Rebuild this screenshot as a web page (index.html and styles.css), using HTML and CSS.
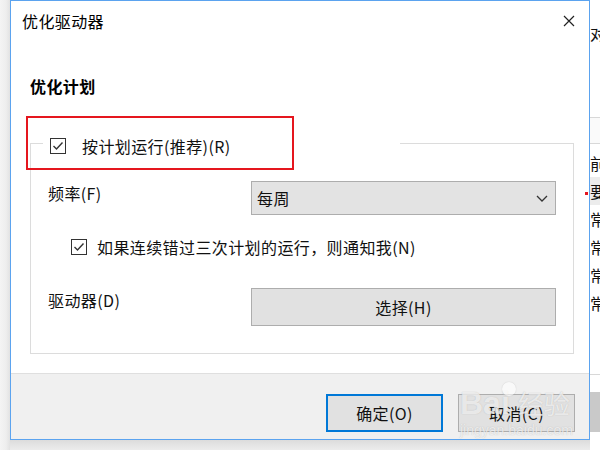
FILE: index.html
```html
<!DOCTYPE html>
<html lang="zh-CN">
<head>
<meta charset="utf-8">
<title>优化驱动器</title>
<link rel="stylesheet" href="styles.css">
</head>
<body>
<div class="screen">
  <div class="shade-left"></div>
  <div class="dialog">
    <div class="titlebar">
      <span class="title">优化驱动器</span>
      <svg class="close" width="12" height="12" viewBox="0 0 12 12"><path d="M1 1L11 11M11 1L1 11" stroke="#222" stroke-width="1.2" fill="none"/></svg>
    </div>
    <div class="content">
      <div class="heading">优化计划</div>
      <fieldset class="group">
        <legend class="legend">
          <span class="check"><svg width="14" height="14" viewBox="0 0 14 14"><path d="M2.5 7L5.5 10L11.5 3.5" stroke="#333" stroke-width="1.4" fill="none"/></svg></span>
          <span class="legend-text">按计划运行(推荐)(R)</span>
        </legend>
        <div class="row row-freq">
          <span class="label">频率(F)</span>
          <div class="select">
            <span>每周</span>
            <svg class="chev" width="12" height="7" viewBox="0 0 12 7"><path d="M1 1L6 6L11 1" stroke="#333" stroke-width="1.3" fill="none"/></svg>
          </div>
        </div>
        <div class="row row-notify">
          <span class="check"><svg width="14" height="14" viewBox="0 0 14 14"><path d="M2.5 7L5.5 10L11.5 3.5" stroke="#333" stroke-width="1.4" fill="none"/></svg></span>
          <span>如果连续错过三次计划的运行，则通知我(N)</span>
        </div>
        <div class="row row-drive">
          <span class="label">驱动器(D)</span>
          <div class="btn btn-wide">选择(H)</div>
        </div>
      </fieldset>
    </div>
    <div class="footer">
      <div class="btn btn-primary">确定(O)</div>
      <div class="btn">取消(C)</div>
    </div>
  </div>
  <div class="bgwin">
    <div class="bg-top">对</div>
    <div class="bg-head"></div>
    <div class="bg-row">前</div>
    <div class="bg-row bg-sel">要</div>
    <div class="bg-row">常</div>
    <div class="bg-row">常</div>
    <div class="bg-row">常</div>
    <div class="bg-row">常</div>
    <div class="bg-gap"></div>
    <div class="bg-btn"></div>
  </div>
  <div class="annot-rect"></div>
  <div class="annot-dot"></div>
  <div class="watermark">
    <div class="wm-main"><span class="wm-bai">Bai</span><span class="wm-paw"></span><span class="wm-jy">经验</span></div>
    <div class="wm-url">jingyan.baidu.com</div>
  </div>
</div>
</body>
</html>
```
FILE: styles.css
```css
html, body {
  margin: 0;
  padding: 0;
}
body {
  background: #f2f2f2;
  font-family: "Noto Sans CJK SC", "Noto Sans", sans-serif;
  font-size: 16px;
  letter-spacing: 0.4px;
  color: #111;
}
.screen {
  position: relative;
  width: 600px;
  height: 450px;
  overflow: hidden;
  display: flex;
  align-items: flex-start;
  background: linear-gradient(to bottom, #f2f2f2 0, #f2f2f2 438px, #dcdcdc 440px, #ececec 450px);
}
.shade-left {
  width: 10px;
  height: 450px;
  flex: none;
  background: linear-gradient(to right, #f4f4f4 0, #eeeeee 6px, #e2e2e2 10px);
}
.dialog {
  width: 580px;
  height: 440px;
  flex: none;
  box-sizing: border-box;
  border: 1px solid #5ba3ef;
  background: #fff;
  display: flex;
  flex-direction: column;
  position: relative;
  z-index: 1;
}
.titlebar {
  height: 40px;
  flex: none;
  display: flex;
  align-items: center;
  justify-content: space-between;
  padding: 0 14px 0 11px;
}
.title {
  line-height: 22px;
  color: #000;
}
.close {
  margin-top: -1px;
}
.content {
  flex: 1;
  padding: 34px 15px 0 19px;
}
.heading {
  font-weight: bold;
  line-height: 22px;
  color: #000;
}
.group {
  margin: 33px 0 0 0;
  padding: 25px 15px 27px 17px;
  border: 1px solid #dcdcdc;
  min-width: 0;
}
.legend {
  margin-left: -5px;
  width: 357px;
  box-sizing: border-box;
  padding: 6px 0 0 7px;
  height: 26px;
  display: flex;
  align-items: center;
  gap: 16px;
  line-height: 20px;
}
.check {
  width: 16px;
  height: 16px;
  box-sizing: border-box;
  border: 1px solid #333;
  display: flex;
  align-items: center;
  justify-content: center;
  flex: none;
  background: #fff;
}
.row {
  display: flex;
}
.row-freq {
  height: 34px;
}
.label {
  width: 203px;
  flex: none;
  line-height: 22px;
  margin-top: 1px;
}
.select {
  width: 305px;
  height: 34px;
  box-sizing: border-box;
  border: 1px solid #adadad;
  background: #e3e3e3;
  display: flex;
  align-items: center;
  justify-content: space-between;
  padding: 0 7px 0 5px;
  line-height: 22px;
}
.row-notify {
  margin-top: 21px;
  height: 22px;
  align-items: center;
  padding-left: 23px;
  gap: 10px;
  line-height: 22px;
}
.row-drive {
  margin-top: 30px;
}
.btn {
  width: 117px;
  height: 38px;
  box-sizing: border-box;
  border: 1px solid #adadad;
  background: #e1e1e1;
  display: flex;
  align-items: center;
  justify-content: center;
  line-height: 22px;
}
.btn-wide {
  width: 305px;
}
.btn-primary {
  border: 2px solid #0078d7;
}
.footer {
  height: 66px;
  flex: none;
  box-sizing: border-box;
  border-top: 1px solid #dfdfdf;
  background: #f0f0f0;
  display: flex;
  justify-content: flex-end;
  align-items: flex-start;
  gap: 15px;
  padding: 20px 14px 0 0;
}
.bgwin {
  width: 10px;
  height: 450px;
  flex: none;
  overflow: hidden;
  background: #fff;
  white-space: nowrap;
  line-height: 22px;
}
.bg-top {
  height: 117px;
  box-sizing: border-box;
  padding-top: 22px;
}
.bg-head {
  height: 27px;
  box-sizing: border-box;
  border-top: 1px solid #d8d8d8;
  border-bottom: 1px solid #d8d8d8;
  background: #fafafa;
  margin-bottom: 5px;
}
.bg-row {
  height: 28px;
  box-sizing: border-box;
  padding-top: 3px;
}
.bg-sel {
  background: #ececec;
}
.bg-gap {
  height: 57px;
  border-bottom: 1px solid #d8d8d8;
  margin-bottom: 17px;
}
.bg-btn {
  height: 40px;
  background: #c9c9c9;
}
.annot-rect {
  position: absolute;
  left: 26px;
  top: 116px;
  width: 268px;
  height: 54px;
  box-sizing: border-box;
  border: 2px solid #e5161e;
  z-index: 2;
}
.annot-dot {
  position: absolute;
  left: 585px;
  top: 192px;
  width: 3px;
  height: 3px;
  background: #e5161e;
  z-index: 2;
}
.watermark {
  position: absolute;
  left: 460px;
  top: 380px;
  z-index: 3;
  letter-spacing: 0;
  color: rgba(255, 255, 255, 0.7);
  font-family: "Liberation Sans", "Noto Sans CJK SC", sans-serif;
  text-shadow: 0 0 1px rgba(140, 140, 140, 0.5);
}
.wm-main {
  display: flex;
  align-items: flex-end;
  height: 40px;
}
.wm-bai {
  font-size: 32px;
  font-weight: bold;
  line-height: 34px;
}
.wm-paw {
  width: 14px;
  height: 14px;
  border-radius: 50%;
  background: rgba(255, 255, 255, 0.6);
  box-shadow: 0 0 1px rgba(140, 140, 140, 0.5);
  align-self: flex-start;
  margin: 2px 2px 0 -8px;
}
.wm-jy {
  font-family: "Noto Sans CJK SC", sans-serif;
  font-size: 26px;
  line-height: 34px;
}
.wm-url {
  font-size: 14px;
  line-height: 16px;
  margin-top: 2px;
}
```
